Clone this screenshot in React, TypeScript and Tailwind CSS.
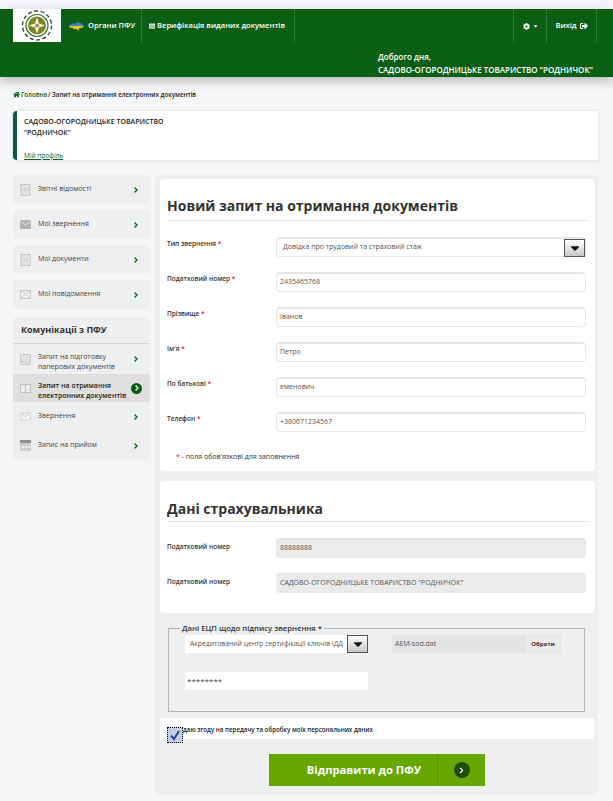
import React from 'react';
import { ChevronRight } from 'lucide-react';
import { FaHome, FaCog, FaSignOutAlt, FaTh, FaCaretDown } from 'react-icons/fa';

const Logo = () => (
    <svg viewBox="0 0 48 33" className="w-12 h-[33px]">
        <rect width="48" height="33" fill="#fff" />
        <circle cx="24" cy="16.5" r="14.5" fill="none" stroke="#444" strokeWidth="1.4" strokeDasharray="4 2.5" />
        <circle cx="24" cy="16.5" r="11" fill="none" stroke="#3f7d2a" strokeWidth="1.2" />
        <circle cx="24" cy="16.5" r="9" fill="#7c8528" />
        <path d="M24 8.5 26 14 24 16.5 22 14ZM24 24.5 26 19 24 16.5 22 19ZM16 16.5 21.5 14.5 24 16.5 21.5 18.5ZM32 16.5 26.5 14.5 24 16.5 26.5 18.5Z" fill="#f6f3d6" />
        <circle cx="24" cy="16.5" r="1.6" fill="#7c8528" />
    </svg>
);

const UaMap = () => (
    <svg viewBox="0 0 16 10" className="w-[15px] h-[10px]">
        <path d="M0 5 3 2l3 .5L9 1l4 1 3 2.5V5Z" fill="#3f7fc4" />
        <path d="M0 5h16l-2 2-3 .5L10 10 8 8.5 5 8 3 6.5 1 7Z" fill="#e8c11c" />
    </svg>
);

// sidebar icons, pale grey like in the original sprite
const DocIcon = () => (
    <svg viewBox="0 0 11 12" className="w-[11px] h-[12px] shrink-0">
        <rect x="1" y="0.5" width="9" height="11" fill="#e4e4e4" stroke="#c4c4c4" />
        <path d="M3 4h5M3 6h5M3 8h5" stroke="#d2d2d2" />
    </svg>
);
const MailFilledIcon = () => (
    <svg viewBox="0 0 11 9" className="w-[11px] h-[9px] shrink-0">
        <rect width="11" height="9" fill="#b3b3b3" />
        <path d="M0 1 5.5 5 11 1" fill="none" stroke="#dcdcdc" />
    </svg>
);
const MailIcon = () => (
    <svg viewBox="0 0 11 9" className="w-[11px] h-[9px] shrink-0">
        <rect x="0.5" y="0.5" width="10" height="8" fill="#f2f2f2" stroke="#c6c6c6" />
        <path d="M1 8 5.5 4 10 8M1 1l4.5 3L10 1" fill="none" stroke="#cfcfcf" />
    </svg>
);
const PaperIcon = () => (
    <svg viewBox="0 0 11 11" className="w-[11px] h-[11px] shrink-0">
        <rect x="0.5" y="0.5" width="10" height="10" rx="1" fill="#e2e2e2" stroke="#c2c2c2" />
        <path d="M1 8h9" stroke="#c8c8c8" />
    </svg>
);
const CheckDocIcon = () => (
    <svg viewBox="0 0 11 9" className="w-[11px] h-[9px] shrink-0">
        <rect x="0.5" y="0.5" width="10" height="8" fill="#ececec" stroke="#c0c0c0" />
        <path d="M5.5 1v7" stroke="#c8c8c8" />
    </svg>
);
const MailCheckIcon = () => (
    <svg viewBox="0 0 11 9" className="w-[11px] h-[9px] shrink-0">
        <path d="M0.5 1h10v7h-10Z" fill="#f4f4f4" stroke="#d2d2d2" />
        <path d="M1 1l4.5 3.5L10 1" fill="none" stroke="#d2d2d2" />
    </svg>
);
const CalendarIcon = () => (
    <svg viewBox="0 0 11 11" className="w-[11px] h-[11px] shrink-0">
        <rect y="1" width="11" height="10" fill="#cdcdcd" />
        <rect width="11" height="3" fill="#8f8f8f" />
        <path d="M2 6h2v2H2ZM5 6h2v2H5ZM8 6h1.5v2H8Z" fill="#f2f2f2" />
    </svg>
);

const Star = () => <span className="text-[#d9232e]">*</span>;

const SideRow = ({ icon: Icon, label, active, rowClass = 'h-[29px]', labelClass = '' }: { icon: any; label: React.ReactNode; active?: boolean; rowClass?: string; labelClass?: string }) => (
    <div className={`flex items-center pl-[7px] pr-[8px] ${rowClass} ${active ? 'bg-[#dfdfdf] font-semibold text-[#222]' : 'font-medium text-[#444]'}`}>
        <span className="w-[11px] flex justify-center shrink-0"><Icon /></span>
        <div className={`ml-[7px] flex-1 text-[7px] leading-[10px] whitespace-nowrap ${labelClass}`}>{label}</div>
        {active ? (
            <span className="w-[11px] h-[11px] rounded-full bg-[#0b5c12] flex items-center justify-center shrink-0">
                <ChevronRight className="w-[8px] h-[8px] text-white" strokeWidth={4} />
            </span>
        ) : (
            <ChevronRight className="w-[8px] h-[8px] text-[#0b5c12] mr-[2px] shrink-0" strokeWidth={4} />
        )}
    </div>
);

const SideCard = ({ icon, label }: { icon: any; label: string }) => (
    <div className="rounded bg-[#eeeff1]">
        <SideRow icon={icon} label={label} labelClass="pb-[2px]" />
    </div>
);

const SelectArrow = () => (
    <span className="w-[21px] h-[18px] border border-[#555] bg-gradient-to-b from-white to-[#c8c8c8] flex items-center justify-center shrink-0">
        <FaCaretDown className="w-[14px] h-[14px] text-[#111]" />
    </span>
);

const Field = ({ label, required, value, disabled, select }: { label: string; required?: boolean; value: string; disabled?: boolean; select?: boolean }) => (
    <div className="flex items-start">
        <label className={`w-[109px] shrink-0 text-[6.5px] font-semibold text-[#333] leading-[10px] ${disabled ? 'mt-[4px]' : 'mt-[2px]'}`}>
            {label} {required && <Star />}
        </label>
        <div className={`flex-1 h-[20px] flex items-center rounded-sm border border-[#e6e6e6] border-t-2 text-[7px] text-[#555] ${disabled ? 'bg-[#ebebeb]' : 'bg-white'} ${select ? 'pl-[6px]' : 'pl-[3px]'}`}>
            <span className="flex-1">{value}</span>
            {select && <SelectArrow />}
        </div>
    </div>
);

const App = () => {
    return (
        <div className="h-[801px] overflow-hidden bg-[#f5f6f8] font-['Open_Sans',sans-serif] text-[#333]">
            {/* Header */}
            <div className="h-[9px] bg-[#f7f7fb]" />
            <header className="h-[68px] bg-[#0a5f14] shadow-[0_4px_10px_rgba(0,0,0,0.25)] text-white relative">
                <div className="flex h-[34px] pl-[13px] pr-[16px]">
                    <Logo />
                    <div className="flex items-center gap-[3px] ml-[8px] w-[73px] text-[7.6px] font-semibold border-r border-[#2d7a35]">
                        <UaMap /> <span className="ml-[1px]">Органи ПФУ</span>
                    </div>
                    <div className="flex items-center gap-[2px] pl-[7px] w-[153px] text-[7.6px] font-semibold border-r border-[#2d7a35] whitespace-nowrap">
                        <FaTh className="w-[6px] h-[6px]" /> Верифікація виданих документів
                    </div>
                    <div className="flex-1" />
                    <div className="flex items-center justify-center gap-[4px] w-[34px] border-x border-[#2d7a35]">
                        <FaCog className="w-[7px] h-[7px]" /><span className="text-[6px]">▾</span>
                    </div>
                    <div className="flex items-center justify-center gap-[3px] w-[50px] border-r border-[#2d7a35] text-[7.6px] font-semibold">
                        Вихід <FaSignOutAlt className="w-[8px] h-[8px]" />
                    </div>
                </div>
                <div className="ml-[378px] mt-[7px] text-[8px] leading-[13px]">
                    <div className="font-semibold">Доброго дня,</div>
                    <div className="font-semibold whitespace-nowrap">САДОВО-ОГОРОДНИЦЬКЕ ТОВАРИСТВО "РОДНИЧОК"</div>
                </div>
            </header>

            {/* Breadcrumb */}
            <div className="flex items-center gap-[1px] pl-[13px] mt-[13px] h-[9px] text-[6.2px] font-semibold text-[#222]">
                <FaHome className="w-[7px] h-[7px] text-[#0a5f14]" />
                <span className="text-[#0a5f14]">Головна</span>
                <span>/ Запит на отримання електронних документів</span>
            </div>

            {/* Profile */}
            <div className="mr-[15px] ml-[13px] mt-[12px] h-[49px] bg-white border-l-[4px] border-[#10544a] rounded-l shadow-[0_0_4px_rgba(0,0,0,0.12)] pl-[7px] pt-[5px] text-[7px] font-semibold leading-[11px] text-[#222]">
                <div>САДОВО-ОГОРОДНИЦЬКЕ ТОВАРИСТВО</div>
                <div>"РОДНИЧОК"</div>
                <div className="mt-[12px] text-[#0a5f14] underline font-medium text-[6.5px]">Мій профіль</div>
            </div>

            <div className="flex ml-[13px] mt-[15px] gap-[5px]">
                {/* Sidebar */}
                <aside className="w-[137px] shrink-0 flex flex-col gap-[6px]">
                    <SideCard icon={DocIcon} label="Звітні відомості" />
                    <SideCard icon={MailFilledIcon} label="Мої звернення" />
                    <SideCard icon={DocIcon} label="Мої документи" />
                    <SideCard icon={MailIcon} label="Мої повідомлення" />
                    <div className="rounded bg-[#eeeff1] mt-[2px]">
                        <div className="h-[27px] flex items-center pl-[8px] text-[9px] font-bold text-[#333] border-b border-[#d5d5d5]">Комунікації з ПФУ</div>
                        <SideRow icon={PaperIcon} rowClass="h-[30px]" labelClass="pt-[6px]" label={<>Запит на підготовку<br />паперових документів</>} />
                        <SideRow icon={CheckDocIcon} active rowClass="h-[28px]" labelClass="pt-[6px]" label={<>Запит на отримання<br />електронних документів</>} />
                        <SideRow icon={MailCheckIcon} labelClass="pb-[2px]" label="Звернення" />
                        <SideRow icon={CalendarIcon} labelClass="pb-[2px]" label="Запис на прийом" />
                    </div>
                </aside>

                {/* Main */}
                <main className="w-[443px] h-[620px] bg-[#eeeff1] rounded px-[5px] pt-[4px]">
                    <section className="w-[435px] bg-white rounded h-[292px] px-[7px] pt-[16px]">
                        <h1 className="text-[14px] leading-[22px] font-bold text-[#333] border-b border-[#e4e4e4] pb-[3px]">Новий запит на отримання документів</h1>
                        <div className="flex flex-col gap-[15px] mt-[16px] pr-[2px]">
                            <Field label="Тип звернення" required value="Довідка про трудовий та страховий стаж" select />
                            <Field label="Податковий номер" required value="2435465768" />
                            <Field label="Прізвище" required value="Іванов" />
                            <Field label="Ім'я" required value="Петро" />
                            <Field label="По батькові" required value="еменович" />
                            <Field label="Телефон" required value="+380671234567" />
                        </div>
                        <p className="ml-[9px] mt-[20px] text-[7px] text-[#333]"><Star /> - поля обов'язкові для заповнення</p>
                    </section>

                    <section className="w-[435px] bg-white rounded h-[132px] mt-[10px] px-[7px] pt-[17px]">
                        <h2 className="text-[14px] leading-[22px] font-bold text-[#333] border-b border-[#e4e4e4] pb-[1px]">Дані страхувальника</h2>
                        <div className="flex flex-col gap-[15px] mt-[16px] pr-[2px]">
                            <Field label="Податковий номер" value="88888888" disabled />
                            <Field label="Податковий номер" value='САДОВО-ОГОРОДНИЦЬКЕ ТОВАРИСТВО "РОДНИЧОК"' disabled />
                        </div>
                    </section>

                    <fieldset className="ml-[8px] mr-[8px] mt-[11px] h-[88px] border border-[#b5b5b5] px-[16px]">
                        <legend className="ml-[-5px] px-[2px] text-[7.7px] font-semibold leading-[8px] text-[#333]">Дані ЕЦП щодо підпису звернення *</legend>
                        <div className="flex mt-[3px]">
                            <div className="w-[183px] h-[18px] flex items-center bg-white pl-[5px] text-[6.8px] text-[#555] whitespace-nowrap">
                                <span className="flex-1 overflow-hidden">Акредитований центр сертифікації ключів ІДД</span>
                                <SelectArrow />
                            </div>
                            <div className="ml-[24px] w-[133px] h-[18px] flex items-center bg-[#e5e5e5] pl-[3px] text-[7px] text-[#555]">AEM-sod.dat</div>
                            <div className="w-[36px] h-[18px] flex items-center justify-center bg-[#ececec] border border-[#e4e4e4] text-[6px] font-bold">Обрати</div>
                        </div>
                        <div className="w-[183px] h-[18px] mt-[19px] flex items-center bg-white pl-[2px] text-[8px] text-[#444]">********</div>
                    </fieldset>

                    <div className="relative w-[434px] h-[21px] mt-[6px] bg-white pl-[23px] pt-[7px] text-[6.2px] leading-[10px] font-semibold text-[#222]">
                        даю згоду на передачу та обробку моїх персональних даних
                        <span className="absolute left-[7px] top-[9px] w-[16px] h-[16px] border border-dotted border-black bg-[#c3cfe4] flex items-center justify-center">
                            <svg viewBox="0 0 12 12" className="w-[12px] h-[12px]"><path d="M2 6.5 5 10l5-8" fill="none" stroke="#2b4a86" strokeWidth="2" /></svg>
                        </span>
                    </div>

                    <button className="ml-[109px] mt-[15px] w-[216px] h-[32px] flex bg-[#66a800] text-white font-bold text-[11.2px]">
                        <span className="w-[169px] h-full flex items-center justify-center border-r border-[#5a9400] pl-[22px]">Відправити до ПФУ</span>
                        <span className="flex-1 flex items-center justify-center">
                            <span className="w-[16px] h-[16px] rounded-full bg-[#1f4a07] flex items-center justify-center">
                                <ChevronRight className="w-[9px] h-[9px] text-white" strokeWidth={3} />
                            </span>
                        </span>
                    </button>
                </main>
            </div>
        </div>
    );
};

export default App;
